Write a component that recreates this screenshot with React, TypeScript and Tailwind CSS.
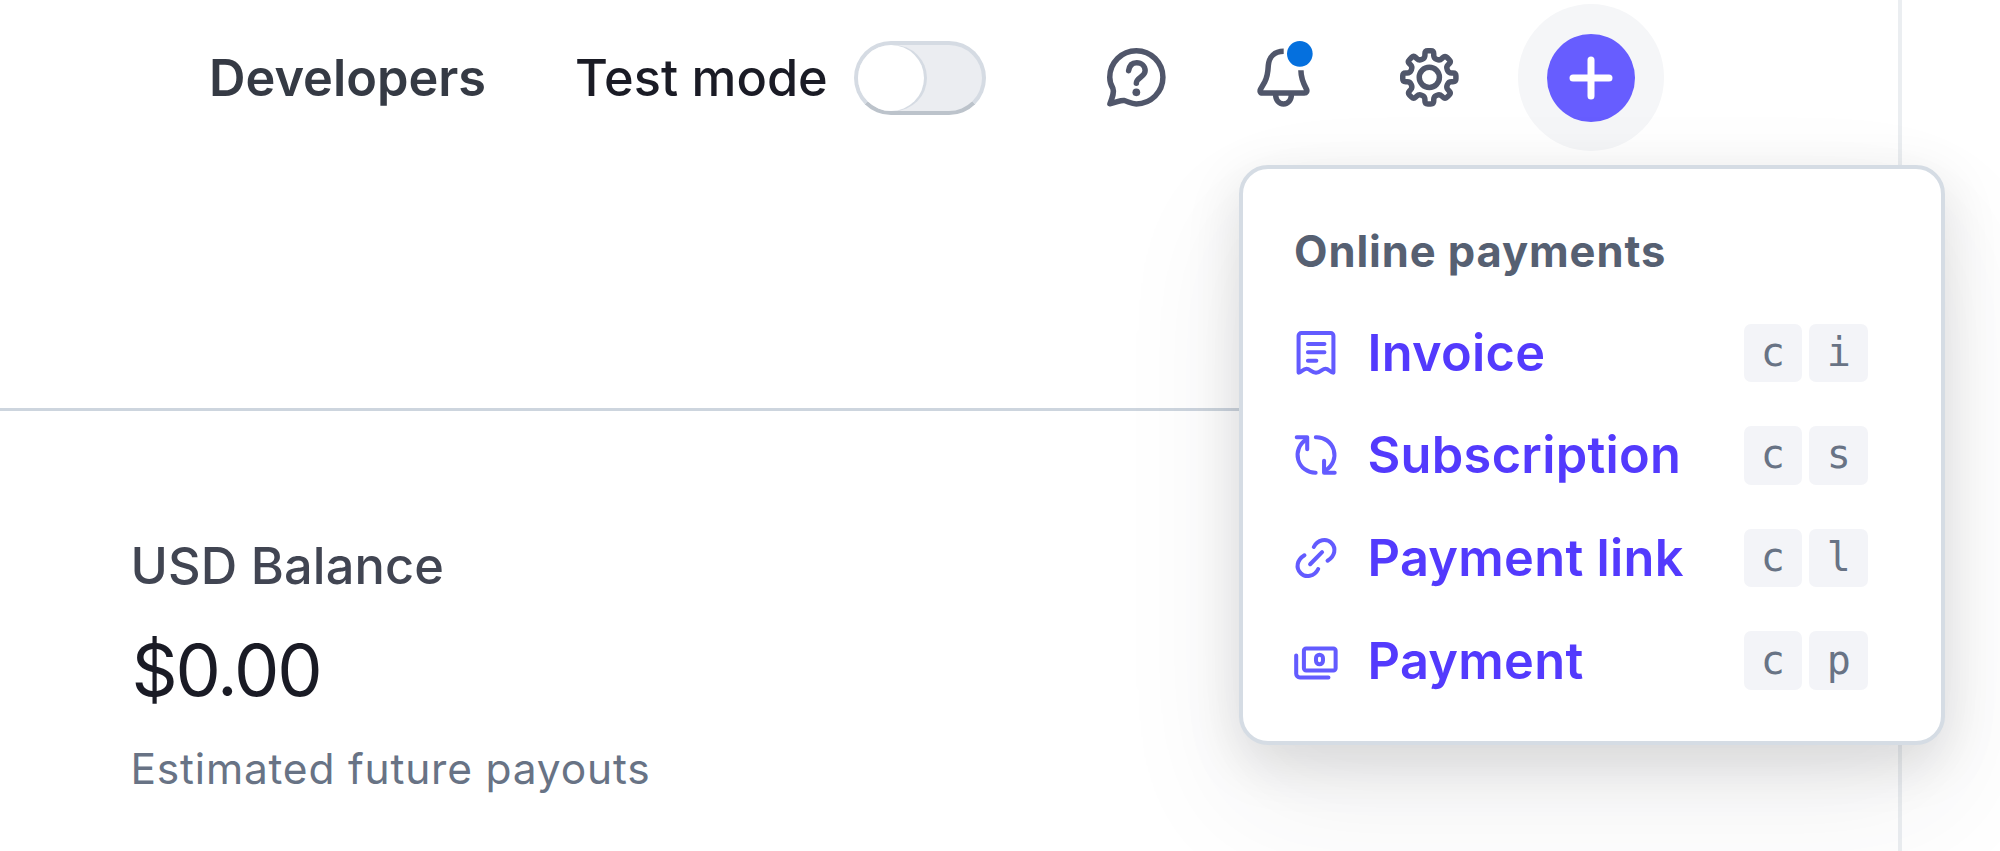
import type { ReactNode } from "react";

type Point = [number, number];

function roundedPath(points: Point[], radius: number): string {
  const n = points.length;
  const parts: string[] = [];
  points.forEach((p, i) => {
    const prev = points[(i + n - 1) % n];
    const next = points[(i + 1) % n];
    const towards = (q: Point): Point => {
      const d = Math.hypot(q[0] - p[0], q[1] - p[1]);
      const t = Math.min(radius / d, 0.5);
      return [p[0] + (q[0] - p[0]) * t, p[1] + (q[1] - p[1]) * t];
    };
    const a = towards(prev);
    const b = towards(next);
    parts.push(`${i === 0 ? "M" : "L"}${a[0].toFixed(3)} ${a[1].toFixed(3)}`);
    parts.push(`Q${p[0].toFixed(3)} ${p[1].toFixed(3)} ${b[0].toFixed(3)} ${b[1].toFixed(3)}`);
  });
  return parts.join("") + "Z";
}

const gearPoints: Point[] = Array.from({ length: 8 }).flatMap((_, i) => {
  const a = (i * Math.PI) / 4;
  const tooth: Point[] = [
    [-1.2, -5.25],
    [-1.2, -7.25],
    [1.2, -7.25],
    [1.2, -5.25],
  ];
  return tooth.map(
    ([x, y]): Point => [8 + x * Math.cos(a) - y * Math.sin(a), 8 + x * Math.sin(a) + y * Math.cos(a)],
  );
});
const gearPath = roundedPath(gearPoints, 0.8);

function NavIcon({ children }: { children: ReactNode }) {
  return (
    <svg
      viewBox="0 0 16 16"
      className="size-[58.67px] shrink-0 overflow-visible"
      fill="none"
      stroke="#50566a"
      strokeWidth="1.5"
      strokeLinejoin="round"
    >
      {children}
    </svg>
  );
}

function ItemIcon({ children }: { children: ReactNode }) {
  return (
    <svg
      viewBox="0 0 12 12"
      className="size-11 shrink-0 overflow-visible"
      fill="none"
      stroke="#635bff"
      strokeWidth="1.1"
      strokeLinecap="round"
      strokeLinejoin="round"
    >
      {children}
    </svg>
  );
}

const items: { label: string; keys: [string, string]; icon: ReactNode }[] = [
  {
    label: "Invoice",
    keys: ["c", "i"],
    icon: (
      <>
        <path d="M1.25 11.35V1.3a.75.75 0 0 1 .75-.75H10a.75.75 0 0 1 .75.75V11.35C9.9 11.35 9.5 10.3 8.6 10.3S7.3 11.3 6 11.4C4.7 11.3 4.4 10.3 3.4 10.3S2.1 11.35 1.25 11.35Z" />
        <path d="M3.8 3.55H8.3M3.8 5.8H8.3M3.8 8.1H6.1" />
      </>
    ),
  },
  {
    label: "Subscription",
    keys: ["c", "s"],
    icon: (
      <>
        <path d="M.75 1.15H3.6V4.4" />
        <path d="M3.4 1.8A4.85 4.85 0 0 0 5.9 10.85" />
        <path d="M5.95 1.15A4.85 4.85 0 0 1 8.6 10.2" />
        <path d="M11.1 10.85H8.2V7.6" />
      </>
    ),
  },
  {
    label: "Payment link",
    keys: ["c", "l"],
    icon: (
      <>
        <path d="M5.4 3C6.4.9 8.9.5 10.2 1.9C11.6 3.3 11.2 5.5 9.15 6.75" />
        <path d="M6.6 9C5.6 11.1 3.1 11.5 1.8 10.1C.4 8.7.8 6.5 2.85 5.25" />
        <path d="M4.4 7.7L7.65 4.4" />
      </>
    ),
  },
  {
    label: "Payment",
    keys: ["c", "p"],
    icon: (
      <>
        <rect x="2.7" y="2.6" width="8.65" height="6" rx=".6" />
        <path d="M.6 4.5V9.5a1 1 0 0 0 1 1H9.4" />
        <rect x="6" y="4.3" width="1.9" height="2.6" rx=".95" />
      </>
    ),
  },
];

function Key({ children }: { children: ReactNode }) {
  return (
    <kbd className="flex size-[58.67px] items-center justify-center rounded-[7px] bg-[#f3f4f8] pb-[2px] font-['DejaVu_Sans_Mono',monospace] text-[40px] leading-none text-[#687385]">
      {children}
    </kbd>
  );
}

function Menu() {
  return (
    <div className="absolute top-[165px] left-[1239px] h-[580px] w-[706px] rounded-[29px] border-4 border-[#d5dce4] bg-white bg-clip-padding pt-[51.5px] pl-[51px] shadow-[0_55px_128px_rgba(48,49,61,0.08),0_18px_55px_rgba(0,0,0,0.12)]">
      <h2 className="h-[81px] text-[43.5px] leading-[60px] font-[650] tracking-[0.9px] whitespace-nowrap text-[#566072]">
        Online payments
      </h2>
      <ul>
        {items.map((item) => (
          <li key={item.label} className="flex h-[102.67px] items-center">
            <ItemIcon>{item.icon}</ItemIcon>
            <span className="ml-[29.5px] w-[376px] shrink-0 text-[50.5px] leading-none font-semibold tracking-[0.28px] whitespace-nowrap text-[#533afd]">
              {item.label}
            </span>
            <span className="flex gap-[7.33px]">
              {item.keys.map((k) => (
                <Key key={k}>{k}</Key>
              ))}
            </span>
          </li>
        ))}
      </ul>
    </div>
  );
}

export default function App() {
  return (
    <div className="relative flex h-[851px] w-[2000px] overflow-hidden bg-white font-[Inter,sans-serif] antialiased">
      <main className="flex w-[1901.5px] shrink-0 flex-col border-r-4 border-[#ebeef1]">
        <header className="flex h-[408px] shrink-0 items-start">
          <div className="flex h-[155.3px] items-center">
            <a className="mt-[2px] ml-[209px] w-[366px] shrink-0 text-[50.5px] leading-none font-semibold whitespace-nowrap text-[#353a44]">
              Developers
            </a>
            <span className="mt-[2px] w-[278.5px] shrink-0 text-[50.5px] leading-none font-medium whitespace-nowrap text-[#1a1b25]">
              Test mode
            </span>
            <span className="flex h-[74px] w-[132px] shrink-0 items-center rounded-full border-4 border-[#d5dbe3] border-b-[#bcc3cb] bg-[#ebedf1]">
              <span className="size-[66px] shrink-0 rounded-full bg-white shadow-[3px_0_0_0_#d5dbe3]" />
            </span>
            <div className="ml-[121.2px] flex items-center gap-[88.2px]">
              <NavIcon>
                <path d="M8 15.25A7.25 7.25 0 1 0 .75 8C.75 9.2 1.1 10.2 1.6 11C2 12 1.6 13.2.8 15.2C2.6 14.9 3.6 14.2 4.6 14.3C5.8 14.6 6.6 15.25 8 15.25Z" />
                <path d="M5.9 6.2C6.1 4.7 7 4 8.1 4c1.3 0 2.3.9 2.3 2.2C10.4 7.9 8 8 8 9.6" strokeLinecap="round" />
                <circle cx="8" cy="12.1" r="1.05" fill="#50566a" stroke="none" />
              </NavIcon>
              <NavIcon>
                <path d="M8.1.9C5.6.9 4.1 2.4 3.9 4.8C3.8 7 3.6 8 2.9 9.3L1.8 11.2C1.5 11.8 1.7 12.3 2.3 12.3H13.7C14.3 12.3 14.6 11.8 14.3 11.2C13.4 9.6 12.8 8.4 12.8 6.1" />
                <path d="M5.9 12.6C5.9 14.2 6.8 15.25 8.05 15.25S10.2 14.2 10.2 12.6" />
                <circle cx="12.5" cy="1.6" r="3.5" fill="#0570de" stroke="none" />
              </NavIcon>
              <NavIcon>
                <path d={gearPath} />
                <circle cx="8" cy="8" r="2.75" />
              </NavIcon>
            </div>
            <button className="ml-[58.6px] flex size-[146.7px] shrink-0 items-center justify-center rounded-full bg-[#f5f6f8]">
              <span className="flex size-[88px] items-center justify-center rounded-full bg-[#675dff]">
                <svg viewBox="0 0 44 44" className="size-11" stroke="#fff" strokeWidth="7" strokeLinecap="round">
                  <path d="M22 4V40M4 22H40" />
                </svg>
              </span>
            </button>
          </div>
        </header>
        <section className="border-t-[3px] border-[#cdd5de] pt-[123px] pl-[130.5px]">
          <h3 className="text-[50.5px] leading-[64px] font-[450] tracking-[0.1px] whitespace-nowrap text-[#414552]">
            USD Balance
          </h3>
          <p className="mt-[28px] pl-px text-[72px] leading-[88px] tracking-[-2.1px] whitespace-nowrap text-[#1a1b25]">
            $0.00
          </p>
          <p className="mt-[27px] text-[42.5px] leading-[56px] tracking-[0.8px] whitespace-nowrap text-[#687385]">
            Estimated future payouts
          </p>
        </section>
      </main>
      <Menu />
    </div>
  );
}
